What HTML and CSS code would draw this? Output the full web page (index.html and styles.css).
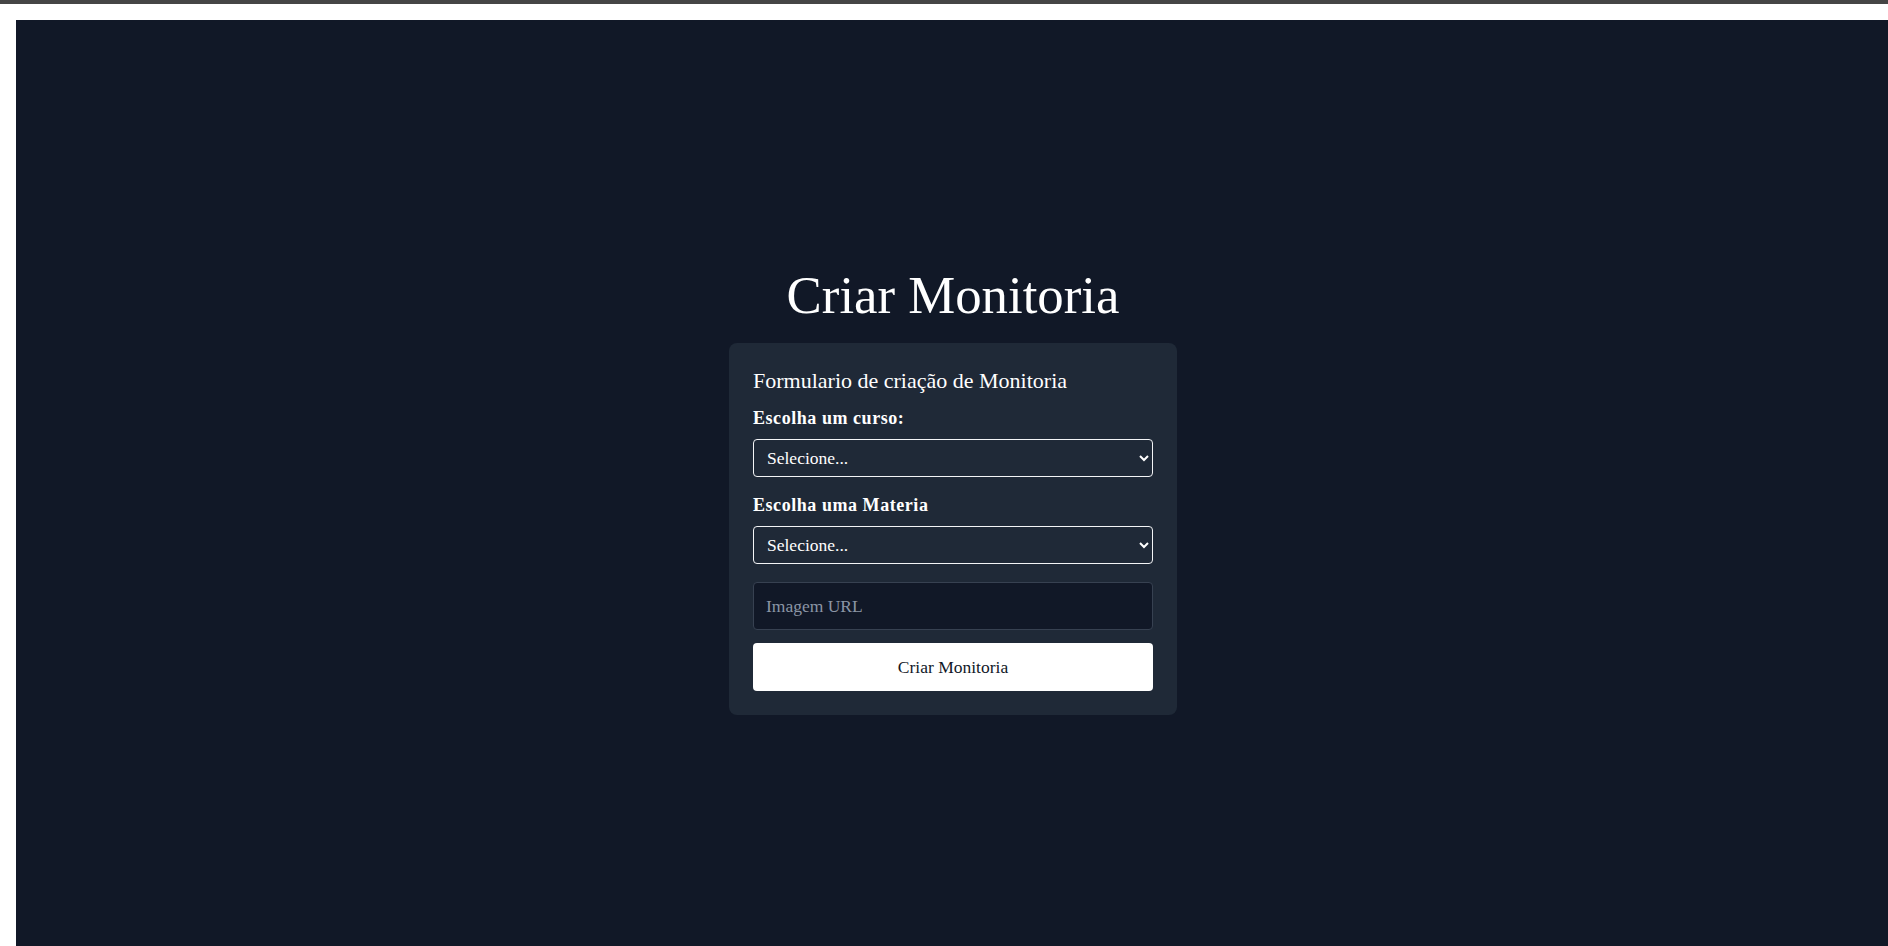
FILE: index.html
```html
<!DOCTYPE html>
<html lang="pt-BR">
<head>
<meta charset="utf-8">
<title>Criar Monitoria</title>
<link rel="stylesheet" href="styles.css">
</head>
<body>
<div class="topbar"></div>
<div class="frame">
  <main class="page">
    <h1 class="page-title">Criar Monitoria</h1>
    <form class="card">
      <h2 class="card-title">Formulario de criação de Monitoria</h2>
      <label class="field-label" for="curso">Escolha um curso:</label>
      <select class="field-select" id="curso">
        <option>Selecione...</option>
      </select>
      <label class="field-label" for="materia">Escolha uma Materia</label>
      <select class="field-select" id="materia">
        <option>Selecione...</option>
      </select>
      <input class="field-input" type="text" placeholder="Imagem URL">
      <button class="submit-btn" type="button">Criar Monitoria</button>
    </form>
  </main>
</div>
</body>
</html>
```
FILE: styles.css
```css
html, body {
  margin: 0;
  padding: 0;
  background: #ffffff;
  overflow: hidden;
}

body {
  font-family: "Liberation Serif", "Times New Roman", serif;
}

.topbar {
  height: 4px;
  background: #454545;
}

.frame {
  padding: 16px 0 0 16px;
}

.page {
  min-height: calc(100vh - 20px);
  background: #111827;
  display: flex;
  flex-direction: column;
  align-items: center;
  padding: 251px 0 0 2px;
  box-sizing: border-box;
}

.page-title {
  margin: 0 0 24px 0;
  font-size: 52.8px;
  line-height: 48px;
  font-weight: 400;
  color: #ffffff;
}

.card {
  width: 448px;
  box-sizing: border-box;
  padding: 24px;
  background: #1f2937;
  border-radius: 8px;
  display: flex;
  flex-direction: column;
}

.card-title {
  margin: 0 0 11px 0;
  font-size: 22px;
  line-height: 28px;
  font-weight: 400;
  color: #ffffff;
}

.field-label {
  display: block;
  font-size: 18px;
  line-height: 24px;
  font-weight: 700;
  letter-spacing: 0.55px;
  color: #ffffff;
  margin-bottom: 9px;
}

.field-select {
  height: 38px;
  width: 100%;
  box-sizing: border-box;
  padding: 0 8px 0 9px;
  margin: 0 0 16px 0;
  font-family: inherit;
  font-size: 17.5px;
  color: #ffffff;
  background-color: #1f2937;
  border: 1px solid #f3f4f6;
  border-radius: 4px;
  color-scheme: dark;
}

.field-select + .field-input {
  margin-top: 2px;
}

.field-input {
  height: 48px;
  width: 100%;
  box-sizing: border-box;
  padding: 0 12px;
  margin: 0 0 13px 0;
  font-family: inherit;
  font-size: 17.5px;
  color: #ffffff;
  background: #111827;
  border: 1px solid #374151;
  border-radius: 4px;
  outline: none;
}

.field-input::placeholder {
  color: #8b95a5;
}

.submit-btn {
  height: 48px;
  width: 100%;
  border: none;
  border-radius: 4px;
  background: #ffffff;
  color: #111827;
  font-family: inherit;
  font-size: 17.5px;
  cursor: pointer;
}
```
